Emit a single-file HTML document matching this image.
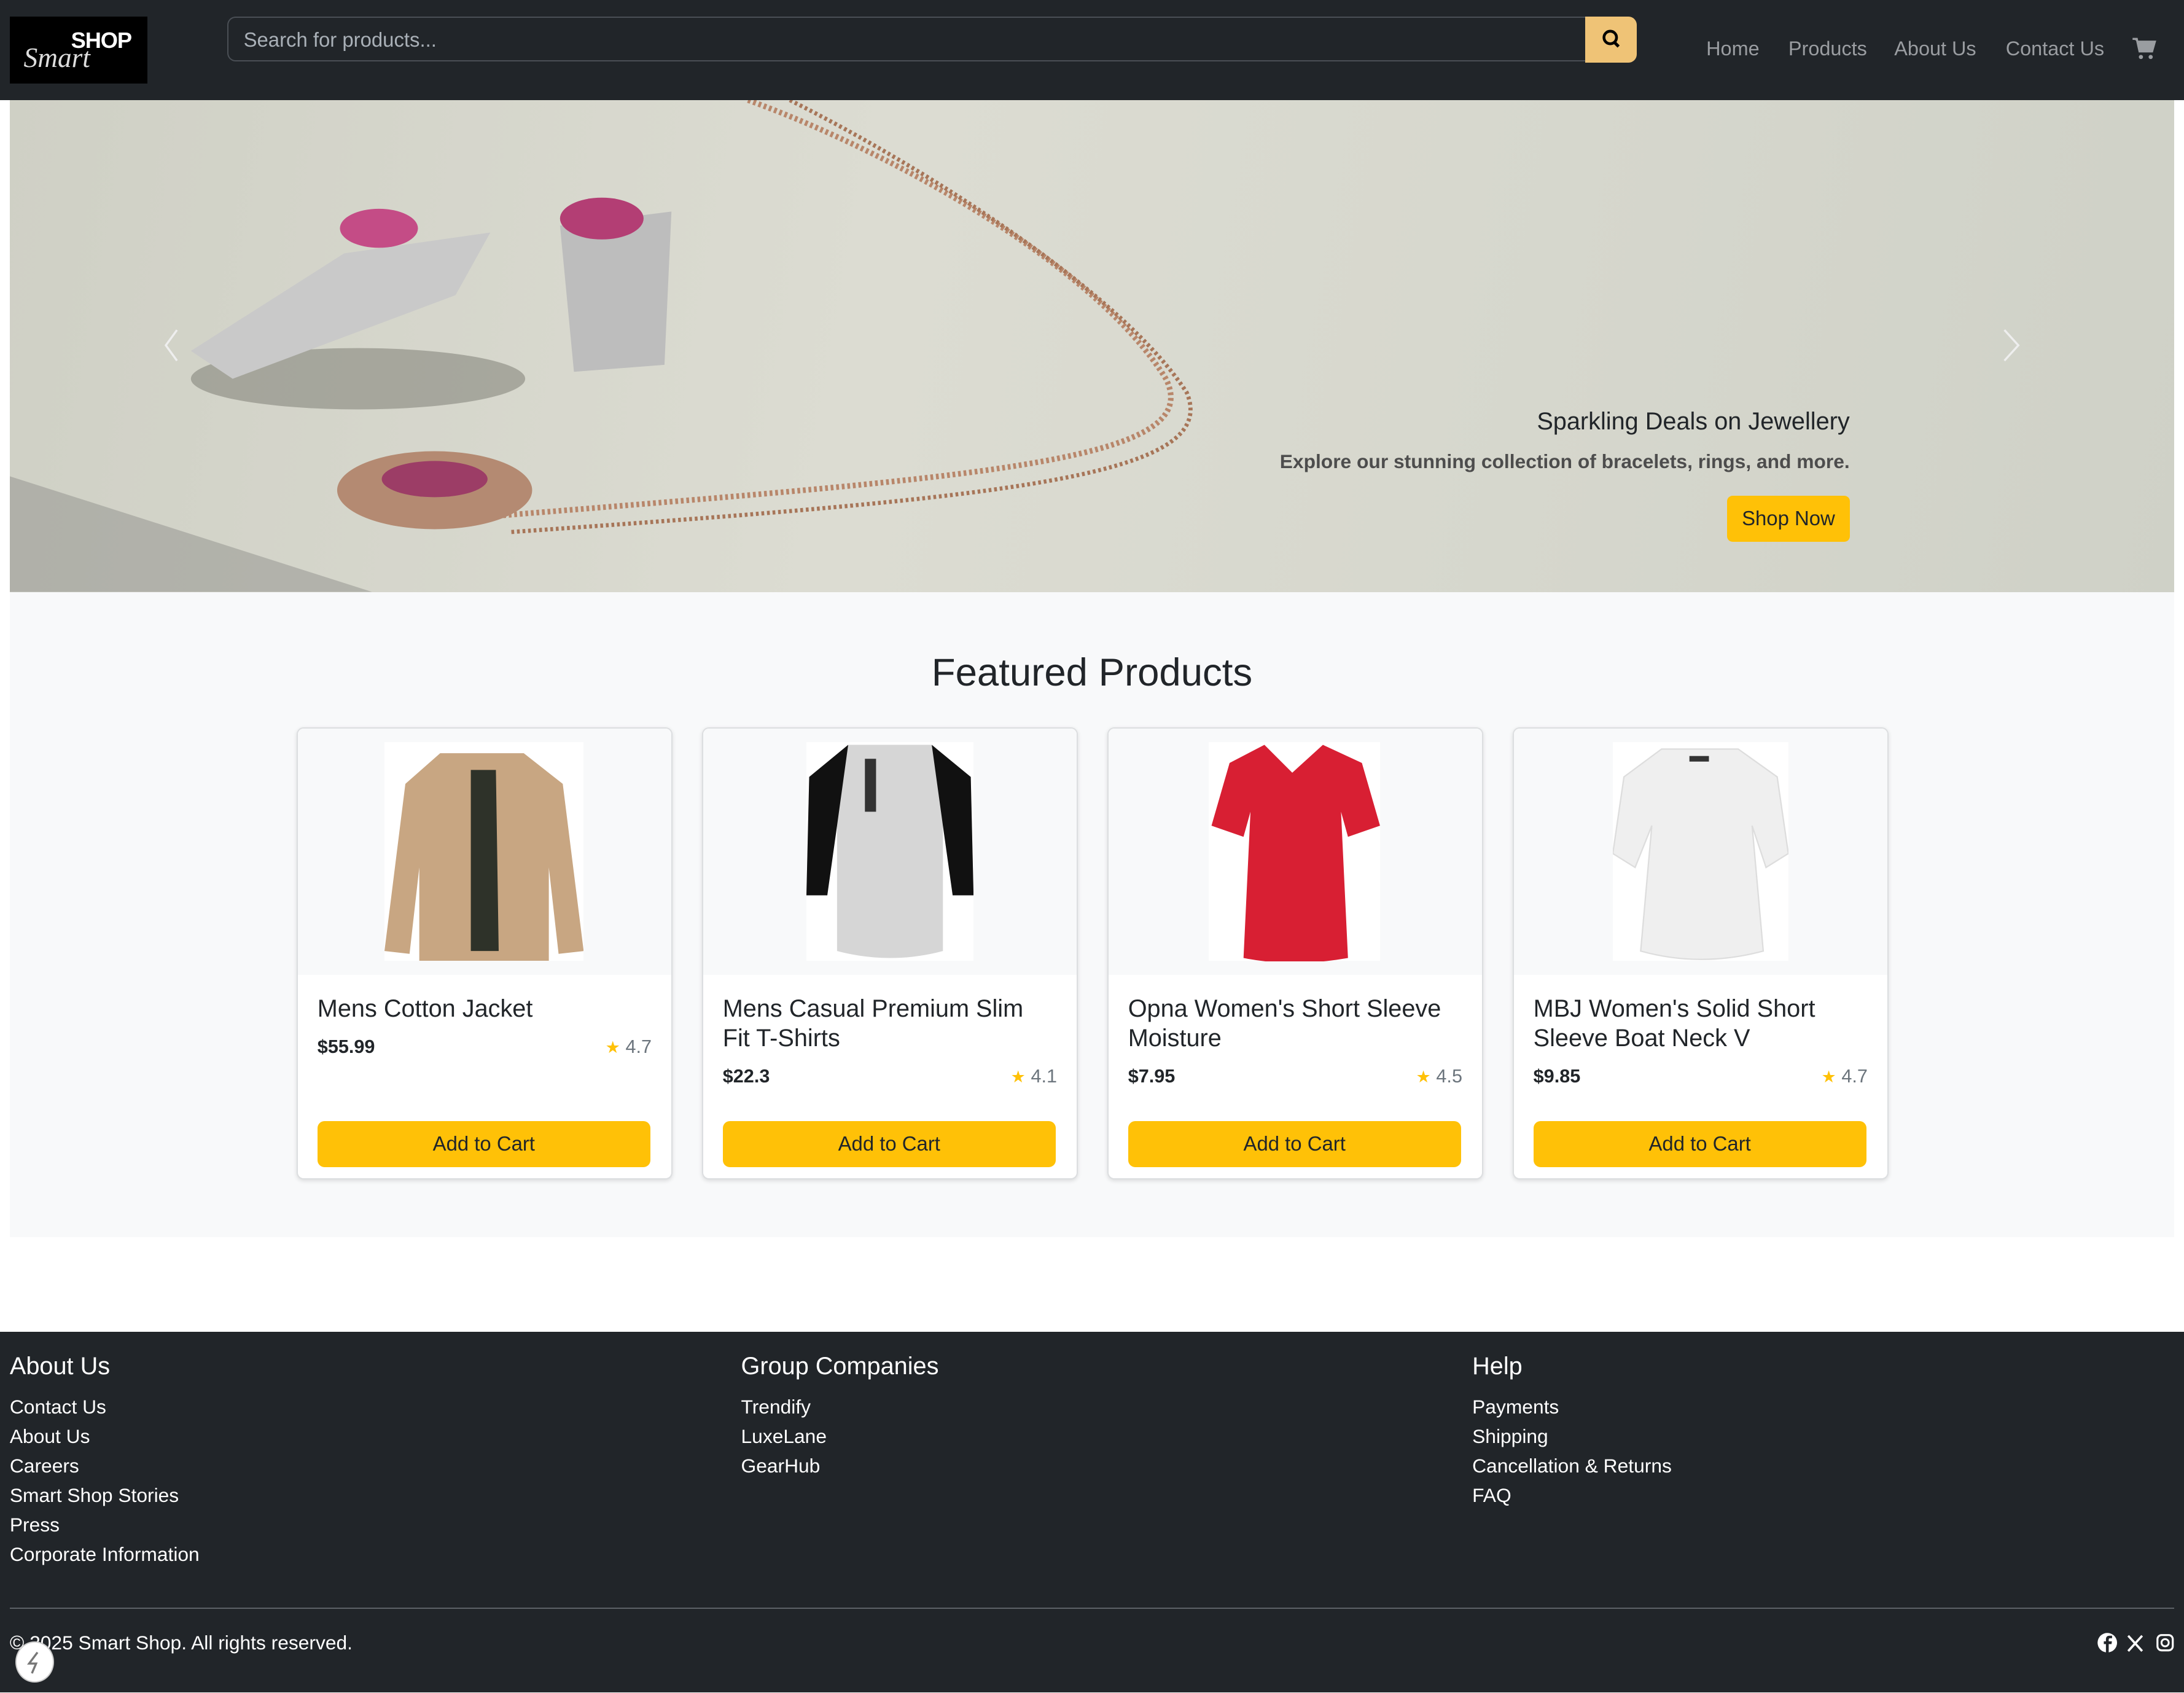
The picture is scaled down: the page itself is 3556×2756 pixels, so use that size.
<!DOCTYPE html>
<html><head><meta charset="utf-8">
<style>
html,body{margin:0;padding:0;}
body{width:3556px;height:2756px;overflow:hidden;background:#fff;}
#w{zoom:2.26786;width:1568px;height:1215px;position:relative;font-family:"Liberation Sans",Arial,sans-serif;color:#212529;overflow:hidden;}
.abs{position:absolute;}
nav{position:absolute;left:0;top:0;width:1568px;height:72px;background:#212529;}
.logo{left:7px;top:12px;width:99px;height:48px;background:#000;}
.search{left:163px;top:12px;width:975px;height:32px;border:1px solid #4a4f55;border-radius:6px 0 0 6px;border-right:none;color:#a9b0b7;font-size:14.5px;line-height:32px;padding-left:11px;box-sizing:border-box;}
.sbtn{left:1138px;top:12px;width:37px;height:33px;background:#efc376;border-radius:0 6px 6px 0;}
.nl{top:27px;color:#9a9da1;font-size:14.3px;}
.hero{left:7px;top:72px;width:1554px;height:353px;background:linear-gradient(100deg,#cfd0c5 0%,#dcdcd2 40%,#d6d7cd 70%,#cfd1c7 100%);overflow:hidden;}
.sec{left:7px;top:425px;width:1554px;height:463px;background:#f8f9fa;}
.card{position:absolute;top:522px;width:268px;height:323px;background:#fff;border:1px solid #dcdee0;border-radius:5px;box-shadow:0 1px 3px rgba(0,0,0,.12);overflow:hidden;}
.card .im{position:absolute;left:0;top:0;width:268px;height:177px;background:#f8f9fa;}
.card .t{position:absolute;left:14px;top:191px;width:240px;font-size:17.5px;line-height:21px;color:#212529;}
.card .p{position:absolute;left:14px;font-weight:bold;font-size:13.5px;}
.card .r{position:absolute;right:14px;font-size:13.5px;color:#6c757d;}
.card .r b{color:#ffc107;font-weight:normal;font-size:12px;}
.card .b{position:absolute;left:14px;top:282px;width:239px;height:33px;background:#ffc107;border-radius:5px;text-align:center;line-height:33px;font-size:14.5px;}
footer{position:absolute;left:0;top:956px;width:1568px;height:259px;background:#212529;color:#fff;}
footer h5{position:absolute;margin:0;top:15px;font-weight:normal;font-size:17.5px;}
footer .l{position:absolute;font-size:14px;line-height:21.2px;top:43px;}
</style></head><body><div id="w">
<nav>
 <div class="abs logo"><span class="abs" style="left:44px;top:8px;color:#fff;font-weight:bold;font-size:16px;letter-spacing:-.5px">SHOP</span><span class="abs" style="left:10px;top:18px;color:#ddd;font-family:'Liberation Serif',serif;font-style:italic;font-size:20px;font-weight:100">Smart</span></div>
 <div class="abs search">Search for products...</div>
 <div class="abs sbtn"><svg width="37" height="33" viewBox="0 0 37 33"><circle cx="18" cy="15" r="4.5" fill="none" stroke="#000" stroke-width="2"/><line x1="21" y1="18.5" x2="24" y2="21.5" stroke="#000" stroke-width="2.2"/></svg></div>
 <span class="abs nl" style="left:1225px">Home</span>
 <span class="abs nl" style="left:1284px">Products</span>
 <span class="abs nl" style="left:1360px">About Us</span>
 <span class="abs nl" style="left:1440px">Contact Us</span>
 <svg class="abs" style="left:1530px;top:27px" width="18" height="16" viewBox="0 0 18 16"><path d="M1 1h3l2 9h9l2-7H5" fill="#9a9da1" stroke="#9a9da1" stroke-width="1.5"/><circle cx="7" cy="14" r="1.5" fill="#9a9da1"/><circle cx="14" cy="14" r="1.5" fill="#9a9da1"/></svg>
</nav>
<div class="abs hero">
 <svg width="1554" height="353" style="position:absolute;left:0;top:0">
  <polygon points="0,270 0,353 260,353" fill="#8f8f8b" opacity=".5"/>
  <path d="M530 0 C640 40 780 120 830 200 C860 260 700 270 330 300" fill="none" stroke="#b8866a" stroke-width="4" stroke-dasharray="2 2"/>
  <path d="M560 0 C660 50 800 140 845 210 C870 270 720 285 360 310" fill="none" stroke="#a77558" stroke-width="3" stroke-dasharray="2 2"/>
  <ellipse cx="305" cy="280" rx="70" ry="28" fill="#b48a72"/><ellipse cx="305" cy="272" rx="38" ry="13" fill="#9c3d66"/>
  <ellipse cx="250" cy="200" rx="120" ry="22" fill="#6c6c64" opacity=".45"/>
  <path d="M130 180 L240 110 L345 95 L320 140 L160 200 Z" fill="#c9c9c9"/>
  <ellipse cx="265" cy="92" rx="28" ry="14" fill="#c44c86"/>
  <path d="M395 90 L475 80 L470 190 L405 195 Z" fill="#bdbdbd"/>
  <ellipse cx="425" cy="85" rx="30" ry="15" fill="#b33e74"/>
  <path d="M120 165 L112 176 L120 187" fill="none" stroke="#eee" stroke-width="1.5"/>
  <path d="M1432 165 L1442 176 L1432 187" fill="none" stroke="#eee" stroke-width="1.5"/>
 </svg>
 <div class="abs" style="right:233px;top:221px;font-size:17.5px;color:#212529">Sparkling Deals on Jewellery</div>
 <div class="abs" style="right:233px;top:251px;font-size:14px;font-weight:bold;color:#4d4d4d">Explore our stunning collection of bracelets, rings, and more.</div>
 <div class="abs" style="right:233px;top:284px;width:88px;height:33px;background:#ffc107;border-radius:4px;text-align:center;line-height:33px;font-size:14.5px">Shop Now</div>
</div>
<div class="abs sec"></div>
<div class="abs" style="left:0;width:1568px;top:467px;text-align:center;font-size:28px">Featured Products</div>

<div class="card" style="left:213px"><div class="im"><svg class="abs" style="left:62px;top:10px" width="143" height="157"><rect width="143" height="157" fill="#fff"/><path d="M40 8 L100 8 L128 30 L143 150 L125 152 L118 90 L118 157 L25 157 L25 90 L18 152 L0 150 L15 30 Z" fill="#c8a682"/><path d="M62 20 L80 20 L82 150 L62 150 Z" fill="#2e3229"/></svg></div>
 <div class="t">Mens Cotton Jacket</div><div class="p" style="top:221px">$55.99</div><div class="r" style="top:221px"><b>★</b> 4.7</div><div class="b">Add to Cart</div></div>
<div class="card" style="left:504px"><div class="im"><svg class="abs" style="left:74px;top:10px" width="120" height="157"><rect width="120" height="157" fill="#fff"/><path d="M30 2 L90 2 L118 25 L120 110 L105 110 L98 60 L98 150 Q60 160 22 150 L22 60 L15 110 L0 110 L2 25 Z" fill="#d6d6d6"/><path d="M30 2 L2 25 L0 110 L15 110 L22 60 Z M90 2 L118 25 L120 110 L105 110 L98 60 Z" fill="#111"/><rect x="42" y="12" width="8" height="38" fill="#333"/></svg></div>
 <div class="t">Mens Casual Premium Slim Fit T-Shirts</div><div class="p" style="top:242px">$22.3</div><div class="r" style="top:242px"><b>★</b> 4.1</div><div class="b">Add to Cart</div></div>
<div class="card" style="left:795px"><div class="im"><svg class="abs" style="left:72px;top:10px" width="123" height="157"><rect width="123" height="157" fill="#fff"/><path d="M40 2 L60 22 L82 2 L110 15 L123 60 L100 68 L95 50 L100 155 Q60 162 25 155 L30 50 L25 68 L2 60 L15 15 Z" fill="#d81f33"/></svg></div>
 <div class="t">Opna Women's Short Sleeve Moisture</div><div class="p" style="top:242px">$7.95</div><div class="r" style="top:242px"><b>★</b> 4.5</div><div class="b">Add to Cart</div></div>
<div class="card" style="left:1086px"><div class="im"><svg class="abs" style="left:71px;top:10px" width="126" height="157"><rect width="126" height="157" fill="#fff"/><path d="M35 5 L90 5 L118 25 L126 80 L110 90 L100 60 L108 150 Q63 162 20 150 L28 60 L16 90 L0 80 L8 25 Z" fill="#efefef" stroke="#ddd"/><rect x="55" y="10" width="14" height="4" fill="#333"/></svg></div>
 <div class="t">MBJ Women's Solid Short Sleeve Boat Neck V</div><div class="p" style="top:242px">$9.85</div><div class="r" style="top:242px"><b>★</b> 4.7</div><div class="b">Add to Cart</div></div>

<footer>
 <h5 style="left:7px">About Us</h5>
 <div class="l" style="left:7px">Contact Us<br>About Us<br>Careers<br>Smart Shop Stories<br>Press<br>Corporate Information</div>
 <h5 style="left:532px">Group Companies</h5>
 <div class="l" style="left:532px">Trendify<br>LuxeLane<br>GearHub</div>
 <h5 style="left:1057px">Help</h5>
 <div class="l" style="left:1057px">Payments<br>Shipping<br>Cancellation &amp; Returns<br>FAQ</div>
 <div class="abs" style="left:7px;top:198px;width:1554px;height:1px;background:#5c6166"></div>
 <div class="abs" style="left:7px;top:215px;font-size:14px">© 2025 Smart Shop. All rights reserved.</div>
 <div class="abs" style="left:11px;top:222px;width:26px;height:28px;border-radius:50%;background:#fff;border:1px solid #ccc"><svg width="26" height="28"><path d="M15 7 L9 15 L14 15 L11 22" fill="none" stroke="#777" stroke-width="1.5"/></svg></div>
 <svg class="abs" style="left:1505px;top:215px" width="58" height="16" viewBox="0 0 58 16">
  <circle cx="8" cy="8" r="7" fill="#fff"/><path d="M9 15 V9 H11 L11.3 7 H9 V5.8 C9 5.2 9.3 4.8 10 4.8 H11.4 V3 H9.6 C7.8 3 7 4 7 5.6 V7 H5.5 V9 H7 V15 Z" fill="#212529"/>
  <path d="M23 3 L33 14 M33 3 L23 14" stroke="#fff" stroke-width="1.6"/>
  <rect x="44" y="2.5" width="11" height="11" rx="3" fill="none" stroke="#fff" stroke-width="1.4"/><circle cx="49.5" cy="8" r="2.6" fill="none" stroke="#fff" stroke-width="1.3"/>
 </svg>
</footer>
</div></body></html>
